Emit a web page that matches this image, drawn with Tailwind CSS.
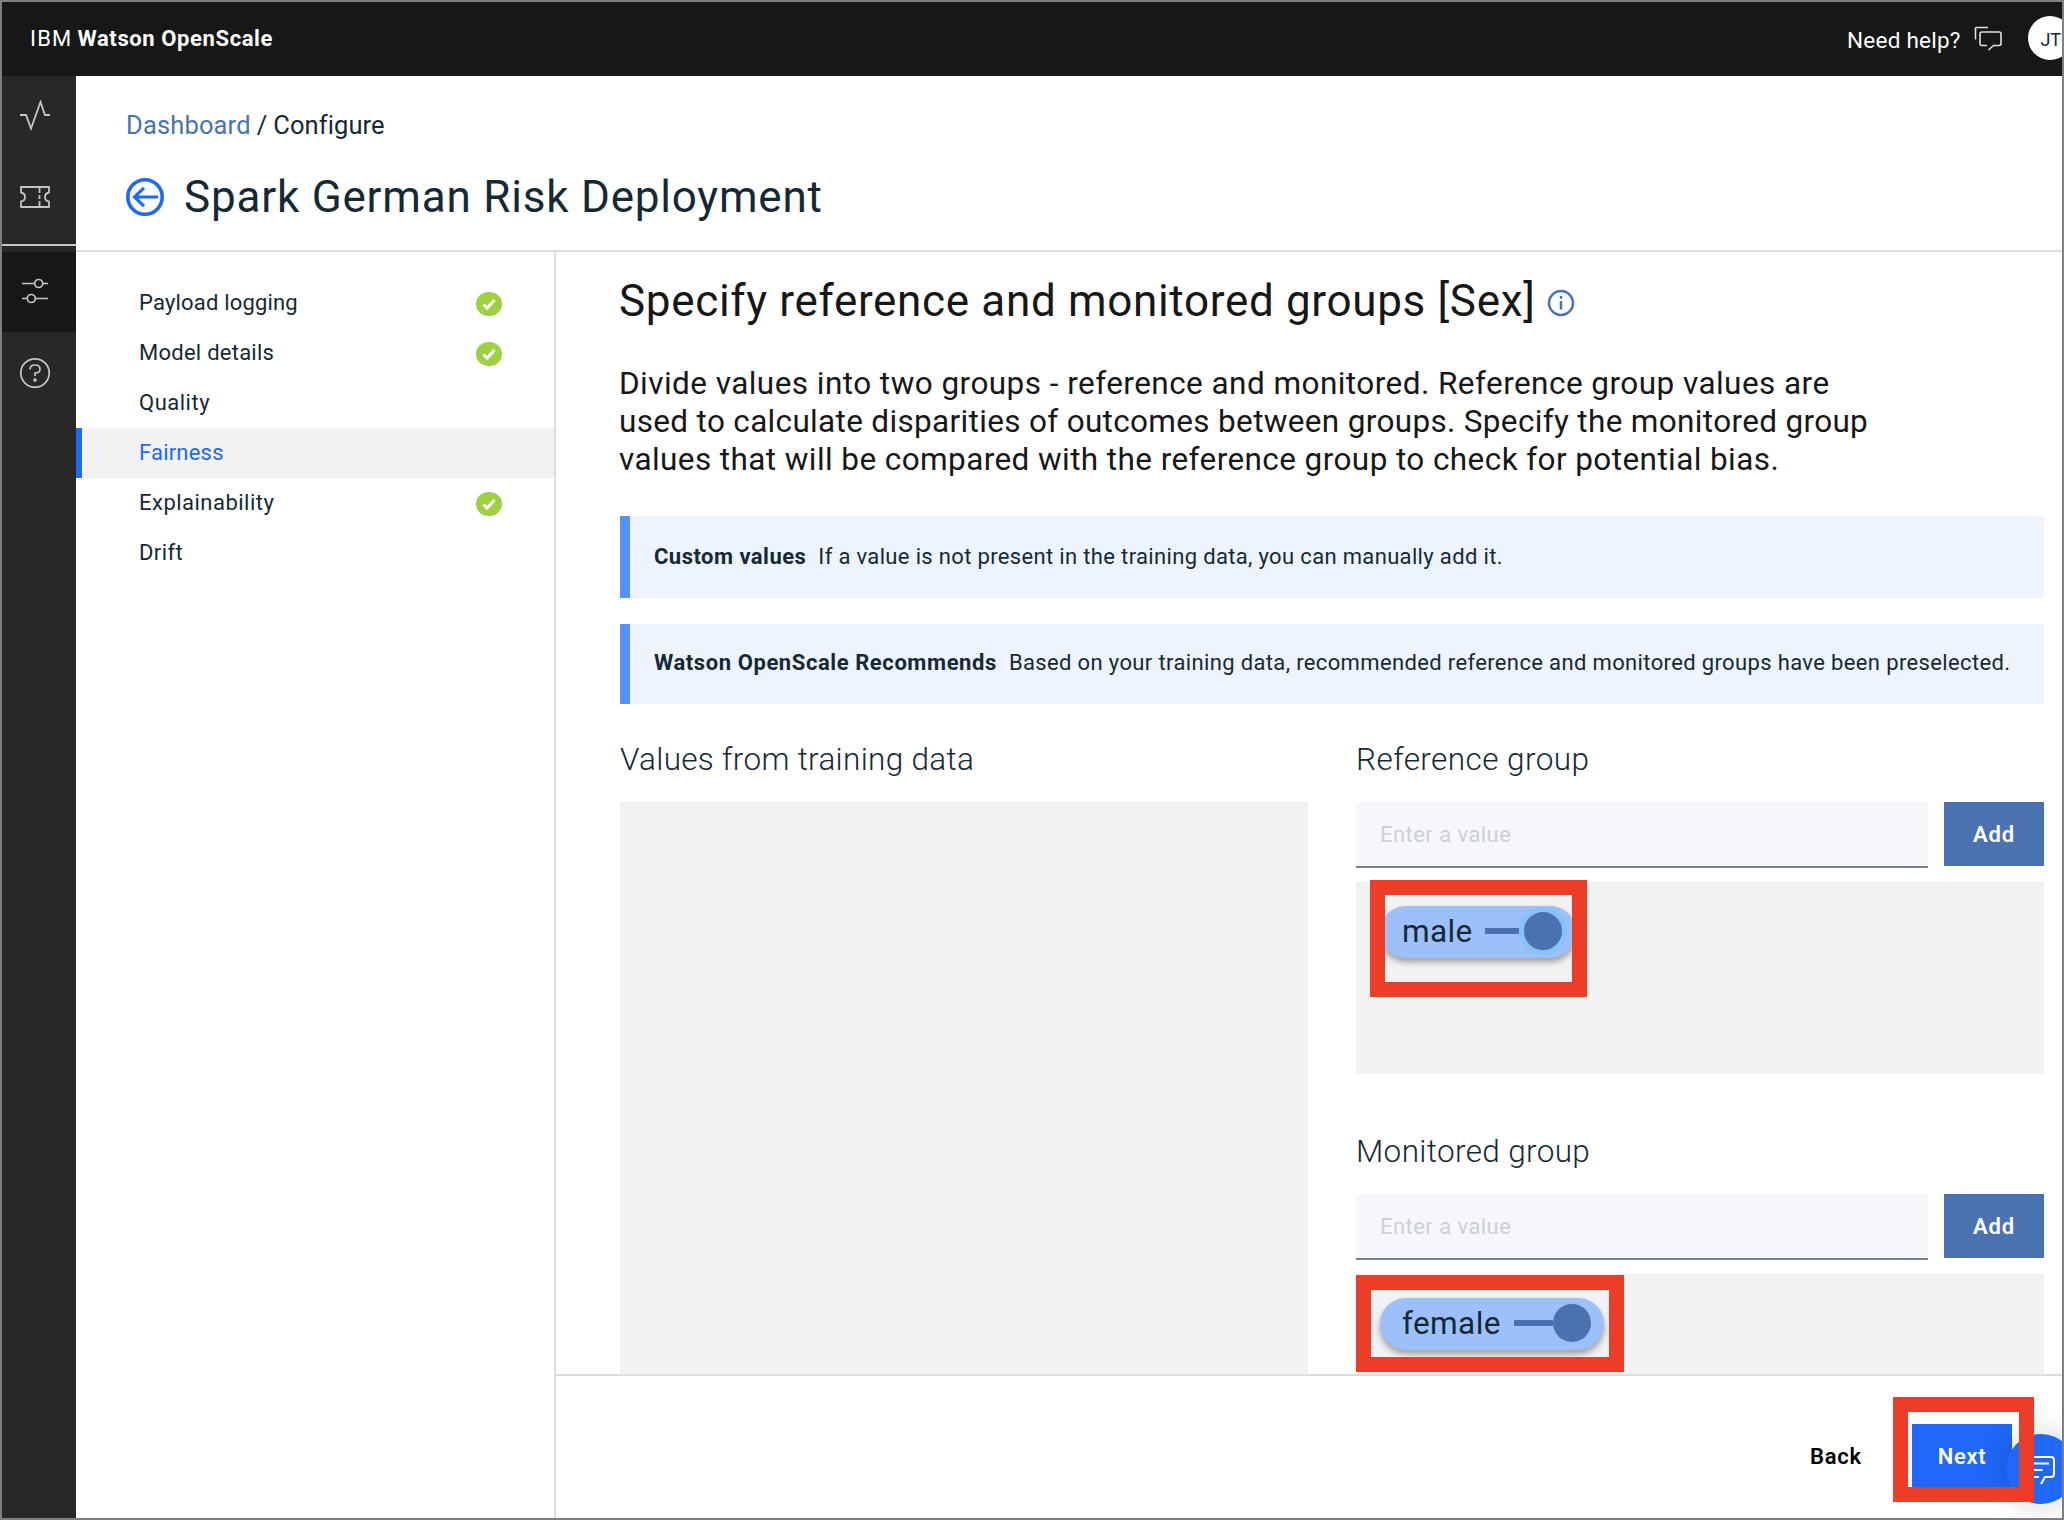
<!DOCTYPE html>
<html lang="en">
<head>
<meta charset="utf-8">
<title>IBM Watson OpenScale</title>
<script src="https://cdn.jsdelivr.net/npm/@tailwindcss/browser@4"></script>
</head>
<body class="bg-white font-['Roboto',sans-serif] text-[#152935]">
<div class="relative flex h-[1520px] w-[2064px] flex-col overflow-hidden border-2 border-[#7f7f7f]">
  <header class="flex h-[74px] shrink-0 items-center bg-[#171717] pl-7 text-white">
    <div class="flex items-center gap-[5px] pb-[2px] text-[22px]"><span class="tracking-[1.2px]">IBM</span><span class="font-bold tracking-[0.6px]">Watson OpenScale</span></div>
    <div class="ml-auto flex w-[215px] shrink-0 items-center">
      <span class="pt-[3px] text-[22.5px] tracking-[0.25px] whitespace-nowrap">Need help?</span>
      <svg class="ml-[13px] shrink-0" width="28" height="28" viewBox="0 0 28 28" fill="none" stroke="#e0e0e0" stroke-width="1.6"><path d="M1.5 14.500V3.500a1 1 0 0 1 1-1H14"/><path d="M13 20.500H8a2 2 0 0 1-2-2V9a2 2 0 0 1 2-2h17a2 2 0 0 1 2 2v9.500a2 2 0 0 1-2 2h-5.500L14.500 25"/></svg>
      <div class="mb-[2px] ml-[26px] flex size-11 shrink-0 items-center justify-center rounded-full bg-white pt-[3px] pl-[2px] text-[18px] text-[#152935]"><span>JT</span></div>
    </div>
  </header>
  <div class="flex min-h-0 flex-1">
    <nav class="flex w-[74px] shrink-0 flex-col bg-[#282828]">
      <a class="flex h-20 items-center pl-[17px]"><svg width="32" height="32" viewBox="0 0 32 32" fill="none" stroke="#c0c6cc" stroke-width="1.8"><path d="M1 15h6l5 13.500L21.500 2l4.500 13h5"/></svg></a>
      <a class="flex h-20 items-center pt-[2px] pl-[17px]"><svg width="32" height="32" viewBox="0 0 32 32" fill="none" stroke="#c0c6cc" stroke-width="1.8" stroke-linejoin="round"><path d="M2 6h28v5.500c-3 0.500-4 2.500-4 4.500s1 4 4 4.500V26H2v-5.500c3-0.500 4-2.500 4-4.500s-1-4-4-4.500z"/><path d="M20.500 6v6M20.500 14v4M20.500 20v6"/></svg></a>
      <div class="mt-2 h-[2px] bg-[#c0c6cc]"></div>
      <a class="mt-[6px] flex h-20 items-center bg-[#171717] pl-[17px]"><svg width="32" height="32" viewBox="0 0 32 32" fill="none" stroke="#c0c6cc" stroke-width="1.7"><path d="M3 7.500h12.500M24 7.500h5M3 22.500h5M16.500 22.500H29"/><circle cx="19.700" cy="7.500" r="4"/><circle cx="12.300" cy="22.500" r="4"/></svg></a>
      <a class="flex h-20 items-center pt-[2px] pl-[17px]"><svg width="32" height="32" viewBox="0 0 32 32" fill="none" stroke="#c0c6cc" stroke-width="1.7"><circle cx="16" cy="16" r="14.200"/><path d="M11 12.500c0-3 2-4.500 5-4.500s5 1.500 5 4.200c0 3-1.800 3.800-5 3.800v3.200"/><circle cx="16" cy="23" r="1" fill="#c0c6cc"/></svg></a>
    </nav>
    <div class="flex min-w-0 flex-1 flex-col">
      <div class="h-[176px] shrink-0 border-b-2 border-[#dcdcdc] pt-[29px] pl-[50px]">
        <div class="flex h-10 items-center gap-[6px] text-[25.5px]"><span class="tracking-[0.15px] text-[#4a72b0]">Dashboard</span><span>/</span><span class="tracking-[0.1px]">Configure</span></div>
        <div class="mt-[22px] flex h-[60px] items-center gap-5">
          <svg width="38" height="38" viewBox="0 0 38 38" fill="none" stroke="#1f68f8" stroke-width="3.200"><circle cx="19" cy="19" r="17.200" stroke-width="3.600"/><path d="M8.500 19H32M18 9.800L8.500 19l9.500 9.200"/></svg>
          <h1 class="text-[44px] tracking-[0.8px] whitespace-nowrap">Spark German Risk Deployment</h1>
        </div>
      </div>
      <div class="flex min-h-0 flex-1">
        <aside class="w-[480px] shrink-0 border-r-2 border-[#dcdcdc] pt-[26px] text-[22px]">
          <div class="flex h-[50px] items-center justify-between pr-[52px] pb-px pl-[63px]"><span class="tracking-[0.18px]">Payload logging</span><svg class="relative top-px" width="26" height="24" viewBox="0 0 26 24"><rect width="26" height="24" rx="12.500" ry="12" fill="#9dd043"/><path d="M7.500 12.500l3.700 3.500 7.300-8" fill="none" stroke="#fff" stroke-width="3"/></svg></div>
          <div class="flex h-[50px] items-center justify-between pr-[52px] pb-px pl-[63px]"><span class="tracking-[0.25px]">Model details</span><svg class="relative top-px" width="26" height="24" viewBox="0 0 26 24"><rect width="26" height="24" rx="12.500" ry="12" fill="#9dd043"/><path d="M7.500 12.500l3.700 3.500 7.300-8" fill="none" stroke="#fff" stroke-width="3"/></svg></div>
          <div class="flex h-[50px] items-center pb-px pl-[63px]"><span class="tracking-[0.5px]">Quality</span></div>
          <div class="flex h-[50px] items-center border-l-[6px] border-[#1f68f8] bg-[#f2f2f2] pb-px pl-[57px] text-[#1f68f8]"><span class="tracking-[0.2px]">Fairness</span></div>
          <div class="flex h-[50px] items-center justify-between pr-[52px] pb-px pl-[63px]"><span class="tracking-[0.48px]">Explainability</span><svg class="relative top-px" width="26" height="24" viewBox="0 0 26 24"><rect width="26" height="24" rx="12.500" ry="12" fill="#9dd043"/><path d="M7.500 12.500l3.700 3.500 7.300-8" fill="none" stroke="#fff" stroke-width="3"/></svg></div>
          <div class="flex h-[50px] items-center pb-px pl-[63px]"><span class="tracking-[0.4px]">Drift</span></div>
        </aside>
        <div class="flex min-w-0 flex-1 flex-col">
          <main class="h-[1122px] shrink-0 overflow-hidden pt-[19px] pr-[18px] pl-16">
            <div class="flex h-[60px] items-center gap-[11px] text-[#171717]">
              <h2 class="-ml-px text-[44px] tracking-[0.67px] whitespace-nowrap">Specify reference and monitored groups [Sex]</h2>
              <svg class="relative top-[2px]" width="28" height="28" viewBox="0 0 28 28" fill="none" stroke="#4a72b0" stroke-width="2.500"><circle cx="14" cy="14" r="12"/><path d="M14 12v8.500"/><path d="M14 7v2.800"/></svg>
            </div>
            <div class="mt-[34px] -ml-px flex flex-col items-start text-[31.5px] leading-[38px] whitespace-nowrap text-[#171717]">
              <span class="tracking-[0.45px]">Divide values into two groups - reference and monitored. Reference group values are</span>
              <span class="tracking-[0.33px]">used to calculate disparities of outcomes between groups. Specify the monitored group</span>
              <span class="tracking-[0.41px]">values that will be compared with the reference group to check for potential bias.</span>
            </div>
            <div class="mt-[37px] flex h-[82px] items-center gap-[12px] border-l-[10px] border-[#5392ff] bg-[#edf4ff] pb-px pl-6 text-[22px] whitespace-nowrap"><span class="font-bold tracking-[0.47px]">Custom values</span><span class="tracking-[0.34px]">If a value is not present in the training data, you can manually add it.</span></div>
            <div class="mt-[26px] flex h-[80px] items-center gap-[12px] border-l-[10px] border-[#5392ff] bg-[#edf4ff] pb-[3px] pl-6 text-[22px] whitespace-nowrap"><span class="font-bold tracking-[0.58px]">Watson OpenScale Recommends</span><span class="tracking-[0.36px]">Based on your training data, recommended reference and monitored groups have been preselected.</span></div>
            <div class="flex gap-12">
              <section class="w-[688px]">
                <h3 class="flex h-[98px] items-center pt-[13px] text-[31.5px] font-light whitespace-nowrap"><span class="tracking-[0.31px]">Values from training data</span></h3>
                <div class="h-[600px] bg-[#f2f2f2]"></div>
              </section>
              <section class="w-[688px]">
                <h3 class="flex h-[98px] items-center pt-[13px] text-[31.5px] font-light whitespace-nowrap"><span class="tracking-[0.42px]">Reference group</span></h3>
                <div class="flex items-start justify-between">
                  <div class="h-[66px] w-[572px] border-b-2 border-[#73808a] bg-[#f5f7fb] pl-6 text-[22px] leading-[65px] text-[#cdd0d4]"><span class="tracking-[0.45px]">Enter a value</span></div>
                  <button class="h-16 w-[100px] bg-[#4a72b0] text-[22px] font-semibold text-white"><span class="tracking-[0.9px]">Add</span></button>
                </div>
                <div class="mt-[14px] h-[192px] bg-[#f2f2f2] pt-6 pl-6">
                  <div class="flex h-[52px] w-[196px] items-center rounded-full bg-[#9ec0fa] pr-[9px] pl-[22px] text-[31.5px] shadow-[0_4px_6px_rgba(0,0,0,0.35)]"><span class="tracking-[0.4px]">male</span><i class="mt-[-2px] ml-auto h-[6px] w-[34px] bg-[#4a72b0]"></i><i class="-mt-[2px] size-12 shrink-0 rounded-full border-[5px] border-[#87c3f8] bg-[#4a72b0]"></i></div>
                </div>
                <h3 class="flex h-[120px] items-center pt-[35px] text-[31.5px] font-light whitespace-nowrap"><span class="tracking-[0.36px]">Monitored group</span></h3>
                <div class="flex items-start justify-between">
                  <div class="h-[66px] w-[572px] border-b-2 border-[#73808a] bg-[#f5f7fb] pl-6 text-[22px] leading-[65px] text-[#cdd0d4]"><span class="tracking-[0.45px]">Enter a value</span></div>
                  <button class="h-16 w-[100px] bg-[#4a72b0] text-[22px] font-semibold text-white"><span class="tracking-[0.9px]">Add</span></button>
                </div>
                <div class="mt-[14px] h-[192px] bg-[#f2f2f2] pt-6 pl-6">
                  <div class="flex h-[52px] w-[224px] items-center rounded-full bg-[#9ec0fa] pr-[13px] pl-[22px] text-[31.5px] shadow-[0_4px_6px_rgba(0,0,0,0.35)]"><span class="tracking-[0.4px]">female</span><i class="mt-[-2px] ml-auto h-[6px] w-[39px] bg-[#4a72b0]"></i><i class="-mt-[2px] size-[38px] shrink-0 rounded-full bg-[#4a72b0]"></i></div>
                </div>
              </section>
            </div>
          </main>
          <footer class="flex flex-1 items-start justify-end gap-[50px] border-t-2 border-[#dcdcdc] pt-12 pr-[50px] text-[22px] font-semibold">
            <button class="h-16 text-black"><span class="tracking-[0.8px]">Back</span></button>
            <button class="h-16 w-[100px] bg-[#1f68f8] text-white"><span class="tracking-[0.7px]">Next</span></button>
          </footer>
        </div>
      </div>
    </div>
  </div>

  <!-- floating chat launcher -->
  <div class="absolute top-[1432px] left-[2004px] flex size-[70px] items-center justify-center rounded-full bg-[#1f68f8] shadow-[0_0_32px_rgba(0,0,0,0.2)]">
    <svg width="32" height="32" viewBox="0 0 32 32" fill="none" stroke="#fff" stroke-width="2" stroke-linejoin="round"><path d="M14 24H6a3 3 0 0 1-3-3V7a3 3 0 0 1 3-3h20a3 3 0 0 1 3 3v14a3 3 0 0 1-3 3h-6L16 31"/><path d="M9 10.500h15M9 17h8.500"/></svg>
  </div>

  <!-- callout frames -->
  <div class="absolute top-[878px] left-[1368px] h-[117px] w-[217px] border-[15px] border-[#eb3d27]"></div>
  <div class="absolute top-[1273px] left-[1354px] h-[97px] w-[268px] border-[15px] border-[#eb3d27]"></div>
  <div class="absolute top-[1395px] left-[1891px] h-[105px] w-[141px] border-[15px] border-[#eb3d27]"></div>
</div>
</body>
</html>
